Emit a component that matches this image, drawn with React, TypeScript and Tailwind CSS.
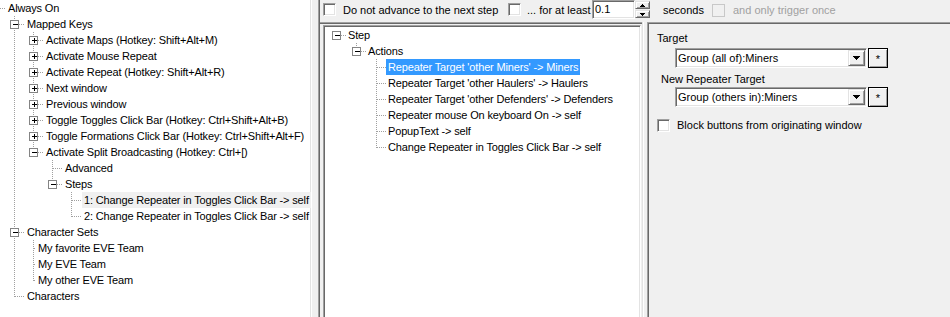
import React from "react";

type TNode = {
  label: string;
  box?: "plus" | "minus";
  gap?: number;
  sel?: "gray" | "blue";
  children?: TNode[];
};

type Row = { node: TNode; level: number; last: boolean; first: boolean; cont: boolean[] };

// 3D edges, classic Windows look
const sunken =
  "border border-t-[#a0a0a0] border-l-[#a0a0a0] border-r-white border-b-white shadow-[inset_1px_1px_0_#696969,inset_-1px_-1px_0_#e3e3e3]";
const raised =
  "border border-t-[#e3e3e3] border-l-[#e3e3e3] border-r-[#696969] border-b-[#696969] bg-[#f0f0f0] shadow-[inset_1px_1px_0_#ffffff,inset_-1px_-1px_0_#a0a0a0]";

const leftTree: TNode[] = [
  {
    label: "Always On",
    children: [
      {
        label: "Mapped Keys",
        box: "minus",
        children: [
          { label: "Activate Maps (Hotkey: Shift+Alt+M)", box: "plus" },
          { label: "Activate Mouse Repeat", box: "plus" },
          { label: "Activate Repeat (Hotkey: Shift+Alt+R)", box: "plus" },
          { label: "Next window", box: "plus" },
          { label: "Previous window", box: "plus" },
          { label: "Toggle Toggles Click Bar (Hotkey: Ctrl+Shift+Alt+B)", box: "plus" },
          { label: "Toggle Formations Click Bar (Hotkey: Ctrl+Shift+Alt+F)", box: "plus" },
          {
            label: "Activate Split Broadcasting (Hotkey: Ctrl+[)",
            box: "minus",
            children: [
              { label: "Advanced" },
              {
                label: "Steps",
                box: "minus",
                children: [
                  { label: "1: Change Repeater in Toggles Click Bar -> self", sel: "gray" },
                  { label: "2: Change Repeater in Toggles Click Bar -> self" },
                ],
              },
            ],
          },
        ],
      },
      {
        label: "Character Sets",
        box: "minus",
        children: [
          { label: "My favorite EVE Team", gap: 5 },
          { label: "My EVE Team", gap: 5 },
          { label: "My other EVE Team", gap: 5 },
        ],
      },
      { label: "Characters" },
    ],
  },
];

const stepTree: TNode[] = [
  {
    label: "Step",
    box: "minus",
    children: [
      {
        label: "Actions",
        box: "minus",
        children: [
          { label: "Repeater Target 'other Miners' -> Miners", sel: "blue" },
          { label: "Repeater Target 'other Haulers' -> Haulers" },
          { label: "Repeater Target 'other Defenders' -> Defenders" },
          { label: "Repeater mouse On keyboard On -> self" },
          { label: "PopupText -> self" },
          { label: "Change Repeater in Toggles Click Bar -> self" },
        ],
      },
    ],
  },
];

function flatten(nodes: TNode[], level = 0, cont: boolean[] = [], out: Row[] = []): Row[] {
  nodes.forEach((node, i) => {
    const last = i === nodes.length - 1;
    out.push({ node, level, last, first: level === 0 && i === 0, cont });
    if (node.children) flatten(node.children, level + 1, [...cont, !last], out);
  });
  return out;
}

const DOT = "#a0a0a0";

function TreeRow({ row, base, indent, gap }: { row: Row; base: number; indent: number; gap: number }) {
  const cx = (l: number) => base + indent * l;
  const x = cx(row.level);
  const textX = x + (row.node.gap ?? gap);
  const w = Math.max(textX - 2, 0);
  const sel =
    row.node.sel === "blue"
      ? "bg-[#3399ff] text-white"
      : row.node.sel === "gray"
        ? "bg-[#f0f0f0]"
        : "";
  return (
    <div className="flex h-[16px] items-stretch">
      <svg width={w} height={16} className="shrink-0" shapeRendering="crispEdges">
        {row.cont.map((c, a) =>
          c ? (
            <line key={a} x1={cx(a) + 0.5} x2={cx(a) + 0.5} y1={0} y2={16} stroke={DOT} strokeDasharray="1 1" />
          ) : null,
        )}
        {!(row.first && row.last) && (
          <line
            x1={x + 0.5}
            x2={x + 0.5}
            y1={row.first ? 8 : 0}
            y2={row.last ? 9 : 16}
            stroke={DOT}
            strokeDasharray="1 1"
          />
        )}
        <line x1={x + 1} x2={w} y1={8.5} y2={8.5} stroke={DOT} strokeDasharray="1 1" />
        {row.node.box && (
          <g>
            <rect x={x - 3.5} y={4.5} width={8} height={8} fill="#fff" stroke="#848484" />
            <line x1={x - 1} x2={x + 4} y1={8.5} y2={8.5} stroke="#000" />
            {row.node.box === "plus" && <line x1={x + 1.5} x2={x + 1.5} y1={6} y2={11} stroke="#000" />}
          </g>
        )}
      </svg>
      <span className={`whitespace-nowrap px-[2px] leading-[16px] tracking-[-0.15px] ${sel}`}>{row.node.label}</span>
    </div>
  );
}

function Tree({ nodes, base, indent, gap }: { nodes: TNode[]; base: number; indent: number; gap: number }) {
  const rows = flatten(nodes);
  return (
    <div className="flex flex-col">
      {rows.map((r, i) => (
        <TreeRow key={i} row={r} base={base} indent={indent} gap={gap} />
      ))}
    </div>
  );
}

function Check({ disabled }: { disabled?: boolean }) {
  return (
    <span
      className={`block h-[13px] w-[13px] shrink-0 ${
        disabled
          ? "border border-[#c8c8c8] bg-[#f0f0f0]"
          : `${sunken} bg-white`
      }`}
    />
  );
}

function Arrow({ up, w }: { up?: boolean; w: number }) {
  const rows = Math.ceil(w / 2);
  return (
    <svg width={w} height={rows} shapeRendering="crispEdges">
      {Array.from({ length: rows }).map((_, i) => {
        const r = up ? rows - 1 - i : i;
        return <rect key={i} x={r} y={i} width={w - r * 2} height={1} fill="#000" />;
      })}
    </svg>
  );
}

function Combo({ value }: { value: string }) {
  return (
    <div className={`flex h-[20px] w-[192px] items-stretch bg-white p-[1px] ${sunken}`}>
      <span className="flex-1 whitespace-nowrap pl-[1px] leading-[16px]">{value}</span>
      <span className={`flex w-[17px] items-center justify-center ${raised}`}>
        <Arrow w={7} />
      </span>
    </div>
  );
}

function StarButton() {
  return (
    <div className="ml-[1px] flex h-[20px] w-[20px] items-center justify-center border border-black bg-[#f0f0f0] pt-[2px] leading-[11px] shadow-[inset_1px_1px_0_#ffffff,inset_-1px_-1px_0_#a0a0a0]">
      *
    </div>
  );
}

function Spin() {
  return (
    <div className="flex h-[19px]">
      <div className={`h-full w-[43px] bg-white p-[1px] pl-[2px] leading-[15px] ${sunken}`}>0.1</div>
      <div className="mt-[1px] flex w-[15px] flex-col">
        <span className={`flex h-[8px] items-center justify-center ${raised}`}>
          <Arrow up w={5} />
        </span>
        <span className={`mt-[1px] flex h-[8px] items-center justify-center ${raised}`}>
          <Arrow w={5} />
        </span>
      </div>
    </div>
  );
}

export default function App() {
  return (
    <div className="flex h-[317px] w-[950px] overflow-hidden bg-[#f0f0f0] font-['Liberation_Sans',Arial,sans-serif] text-[11px] text-black">
      {/* left: configuration tree */}
      <div className="h-full w-[312px] shrink-0 overflow-hidden border-r border-r-white bg-white shadow-[inset_-1px_0_0_#e3e3e3]">
        <Tree nodes={leftTree} base={-5} indent={19} gap={13} />
      </div>

      {/* right: step editor */}
      <div className="ml-[6px] flex h-full flex-1 flex-col pl-[2px] shadow-[inset_1px_0_0_#a0a0a0,inset_2px_0_0_#696969]">
        <div className="flex h-[22px] shrink-0 items-start pl-[3px]">
          <span className="mt-[3px]">
            <Check />
          </span>
          <span className="ml-[7px] mt-[2px] w-[165px] whitespace-nowrap leading-[16px]">
            Do not advance to the next step
          </span>
          <span className="mt-[3px]">
            <Check />
          </span>
          <span className="ml-[6px] mt-[2px] w-[65px] whitespace-nowrap leading-[16px]">... for at least</span>
          <Spin />
          <span className="ml-[13px] mt-[2px] w-[49px] whitespace-nowrap leading-[16px]">seconds</span>
          <span className="mt-[4px]">
            <Check disabled />
          </span>
          <span className="ml-[8px] mt-[2px] whitespace-nowrap leading-[16px] text-[#a0a0a0]">
            and only trigger once
          </span>
        </div>

        <div className="flex min-h-0 flex-1">
          <div className="h-full w-[324px] shrink-0 pl-[3px] pt-[3px] shadow-[inset_-1px_0_0_#ffffff,inset_-2px_0_0_#e3e3e3,inset_0_1px_0_#a0a0a0,inset_0_2px_0_#696969]">
            <div className={`h-[320px] w-[318px] overflow-hidden bg-white p-[1px] ${sunken}`}>
              <Tree nodes={stepTree} base={11} indent={20} gap={12} />
            </div>
          </div>

          <div className="ml-[3px] flex h-full flex-1 flex-col pl-[10px] pt-[2px] shadow-[inset_1px_1px_0_#a0a0a0,inset_2px_2px_0_#696969]">
            <span className="mt-[6px] leading-[16px]">Target</span>
            <div className="ml-[18px] mt-[2px] flex">
              <Combo value="Group (all of):Miners" />
              <StarButton />
            </div>
            <span className="ml-[4px] mt-[3px] leading-[16px]">New Repeater Target</span>
            <div className="ml-[18px] flex">
              <Combo value="Group (others in):Miners" />
              <StarButton />
            </div>
            <div className="mt-[10px] flex items-center">
              <Check />
              <span className="ml-[7px] whitespace-nowrap leading-[16px]">Block buttons from originating window</span>
            </div>
          </div>
        </div>
      </div>
    </div>
  );
}
